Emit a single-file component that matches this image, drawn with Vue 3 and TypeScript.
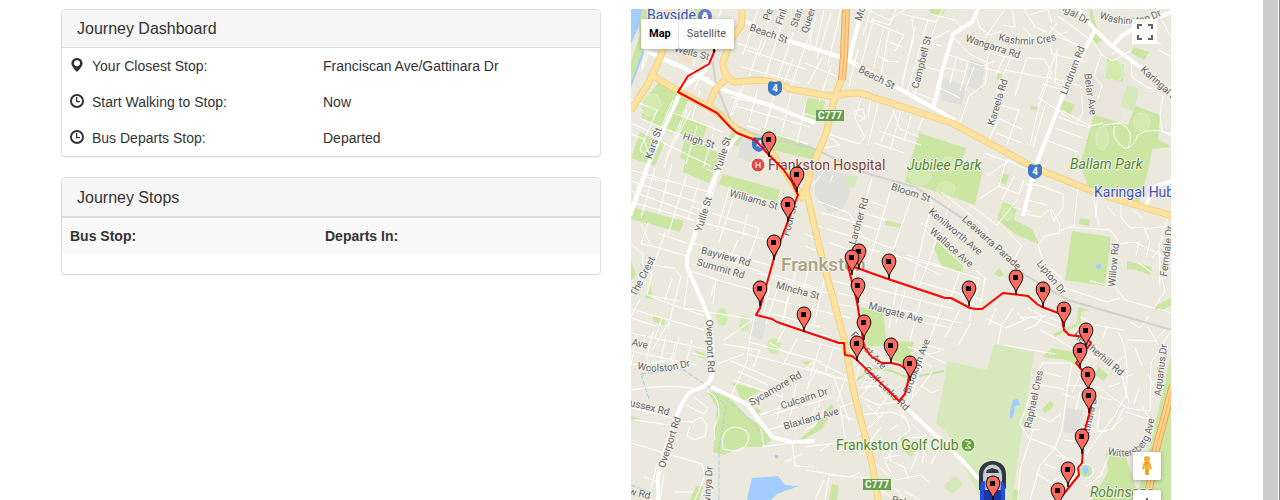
<script setup lang="ts">
interface Label { text: string; x: number; y: number; angle: number }
interface Poi { text: string; x: number; y: number; kind: string }

const journey = [
  { icon: 'pin', label: 'Your Closest Stop:', value: 'Franciscan Ave/Gattinara Dr' },
  { icon: 'clock', label: 'Start Walking to Stop:', value: 'Now' },
  { icon: 'clock', label: 'Bus Departs Stop:', value: 'Departed' },
]

const parks: string[] = [
  'M636 9H650L645 50L631 84V62L640 35Z', 'M631 158L640 132L664 144L655 166Z',
  'M648 96L659 82L690 96L672 134L641 118Z', 'M676 113L707 126L701 144L668 130Z',
  'M685 138L720 154L716 172L680 158Z', 'M735 124L745 132L738 147L727 141Z',
  'M762 128L815 148V160L772 150Z', 'M693 0L705 9L695 32L688 28Z',
  'M631 207L684 221L680 232L631 219Z', 'M686 158L713 173L709 183L683 172Z',
  'M723 174L780 190L777 202L718 184Z', 'M631 260L636 275L631 281Z',
  'M650 282L653 299L645 298Z', 'M653 316L665 320L664 325L652 321Z',
  'M929 9H946Q943 17 935 16Q930 15 929 9Z', 'M805 97L825 101L821 121L805 116Z',
  'M805 148L820 154L816 161L805 157Z', 'M919 133L966 148L962 160L983 169L975 205L947 195L905 182L912 157Z',
  'M1089 0L1099 35L1102 40L1096 44L1092 38Z', 'M1134 47L1149 52L1144 60L1131 53Z',
  'M1107 57L1124 65L1123 82L1106 78Z', 'M1061 99L1075 105L1070 115L1058 108Z',
  'M998 73L1004 75L1002 81L996 79Z', 'M1030 106L1039 107L1038 111L1031 109Z',
  'M1094 115L1128 125L1135 106L1160 115L1158 139L1172 147L1152 149L1148 171L1138 206L1089 189L1080 165Z',
  'M1002 173L1009 175L1006 185L999 182Z', 'M1003 202L1017 207L1014 220L1032 229L1039 244L1015 234L997 219Z',
  'M1072 231L1111 237L1105 286L1065 280Z', 'M1080 218L1090 220L1089 226L1079 224Z',
  'M1127 261L1152 267L1150 275L1137 270L1127 269Z', 'M1172 297V305L1160 311L1154 307Z',
  'M999 268L1004 275L999 277L994 274Z', 'M886 220L901 224L900 228L885 225Z',
  'M938 237L963 262V273L942 268L934 248Z', 'M861 307L883 312L887 346L866 346Z',
  'M888 341L914 342L908 366L890 359Z', 'M1078 307L1090 310L1081 312V323L1077 324Z',
  'M1053 334L1077 323V326L1055 337Z', 'M731 382L761 391L742 401L737 390Z',
  'M695 350L710 356L706 359L698 356Z', 'M707 391L727 395L749 418L761 425L772 440L762 447L742 447L724 455L713 452L717 407Z',
  'M696 486L703 486L699 500H690Z', 'M631 416L640 419L631 420Z', 'M754 406L761 411L757 415Z',
  'M802 362L811 361L808 367Z', 'M797 441L815 427L831 405L834 409L822 429L801 441Z',
  'M1098 366L1108 375L1103 381L1095 375Z', 'M1051 400L1054 406L1046 413L1042 410Z',
  'M901 435L916 445L912 457L902 450Z', 'M832 484L839 485L837 500H829Z',
  'M1052 348L1078 353L1074 365L1067 360L1042 357Z', 'M1106 453L1126 457L1140 500H1092L1108 472Z',
  'M1172 350V500H1136L1152 438Z', 'M1014 489L1020 491L1018 500H1012Z',
]

const paleParks: string[] = [
  'M948 361L987 370L994 344L1034 352L1012 500H981L946 430L936 424Z',
  'M943 486L955 476L963 484L952 494Z', 'M1127 85L1139 89L1134 112L1120 106Z',
  'M847 175L858 177L854 188L845 185Z', 'M741 315L751 318L748 332L738 330Z',
]

const greys: string[] = [
  'M742 130L760 138L756 165L738 157Z', 'M815 170L848 174L850 194L842 210L829 212L815 196Z',
  'M943 79L966 85L962 105L940 100Z', 'M970 60L985 64L981 91L967 86Z',
  'M1066 408L1083 410L1079 434L1063 432Z', 'M752 317L766 320L762 340L750 334Z',
]

const commerce: string[] = [
  'M675 30L695 36L692 64L678 60Z', 'M714 22L730 28L725 39L712 35Z',
  'M856 60L880 70L877 80L858 68Z', 'M947 111L957 116L955 120L945 117Z', 'M751 78L761 79L760 88L749 84Z',
]

// Residential streets, drawn thin.
const streets: string[] = [
  'M655 9L642 67M643 50L676 67M653 15L686 30M665 9L642 70M631 100L657 110L640 150L652 160M640 118L672 132M631 123L655 134M673 100L657 137M691 110L667 158',
  'M704 31L693 66M677 45L692 52M727 25L720 45M706 65L694 90M660 60L710 79M681 86L674 103M700 91L692 119M732 115L745 82M687 109L674 144',
  'M631 134L644 139L651 162M655 139L711 166M661 127L717 149M671 112L723 132M669 150L664 168M681 120L669 151M697 126L686 164M713 134L704 166',
  'M758 9L743 54M773 9L749 76M786 11L764 80M801 10L777 80M816 17L790 89M747 50L805 69M742 67L800 83M756 30L809 49M737 43L757 50M793 59L783 86M767 37L759 56',
  'M740 89L728 121M758 87L749 122M775 90L765 127M791 93L781 136M807 97L797 143M736 106L810 127M747 126L808 144M773 103L765 128M731 97L778 108',
  'M631 170L712 193M631 181L706 205M631 191L700 216M639 184L631 207M655 168L641 218M672 164L659 213M686 177L668 235M699 182L688 219M631 202L694 220M644 177L666 182M663 192L680 196',
  'M648 223L641 244L652 246L690 257M641 224L650 244M659 234L687 243M666 230L654 264M687 219L747 234M692 207L759 228M716 182L707 214M730 186L717 231M736 190L719 242M693 243L772 266M701 222L774 242',
  'M631 244L643 254L642 263L652 274L647 295L678 301M652 265L674 268L682 278M681 276L669 322L653 349M672 279L665 300M631 309L704 330M631 318L656 326M651 297L704 316M640 299L631 317M662 318L655 338M674 303L668 329',
  'M687 270L716 279L711 296M716 279L713 304M692 264L734 277M700 251L775 277M710 278L768 294M738 240L731 256M759 228L751 252L744 268M747 215L742 239M770 285L763 317M689 270L684 308L757 320',
  'M755 315L750 338L747 361L731 396M755 318L724 340M747 354L790 365L820 373L840 379M731 361L783 383M740 346L752 351M738 371L768 385M733 380L783 397M723 344L760 350L753 367',
  'M705 9L700 29M712 12L705 38M722 9L709 38M812 29L809 52M824 10L815 50M831 13L817 59M841 9L828 63M858 49L849 87M874 17L861 65M871 9L863 35M867 20L904 35L895 51M889 31L881 75M883 30L873 70M896 9L890 25L872 20',
  'M867 9L889 20L906 9M912 18L914 38L902 81M915 26L901 91M928 20L907 93M930 36L914 98M943 9L936 22L902 14M936 24L930 41L950 30M926 42L942 46M920 65L940 71M912 91L934 100M885 61L898 62M889 42L902 47M878 56L888 61',
  'M931 14L955 20L963 29M975 13L980 28L990 35L1002 31M953 37L970 54L988 63L985 84L969 96L960 123M946 54L982 66L995 61M943 67L965 72M940 88L960 98M968 63L960 91M957 56L950 83M974 67L965 91',
  'M805 63L836 76M831 66L819 102M822 58L808 84M840 58L853 65M805 114L826 119M861 99L855 118L865 137L859 144L825 133M853 113L865 119M868 117L871 97M854 111L863 109L865 118L860 121M880 95L868 145M875 97L920 116M893 110L900 129L919 137M923 118L918 130M894 111L881 142M901 111L890 150M911 116L904 141M879 131L921 145M874 143L904 153M831 138L840 145L824 148M830 135L815 165',
  'M985 38L1005 9M991 47L985 68L1000 72M985 52L1020 60M1012 9L1015 27L1003 25M1024 9L1035 27L1063 39L1086 48M1030 15L1048 9L1052 23M1023 27L1032 37M1040 39L1050 42L1052 54L1086 62M1050 27L1082 50M1058 16L1088 38M1055 35L1067 32M1057 23L1047 36',
  'M1004 57L996 75M1010 59L1000 83L995 123M1026 60L1015 96M1005 70L1047 78M1026 58L1044 59L1052 72L1045 84L1039 98L1068 117L1072 120M1058 48L1047 77L1081 86L1083 113L1077 122M1048 81L1039 105L1030 145M1000 105L1019 110L1007 145M1000 119L1022 129M1045 106L1033 147M996 133L1022 143M1000 118L985 146M1058 117L1090 128M1055 128L1083 138M1048 141L1078 152M1057 51L1055 82M1042 84L1065 90M1067 88L1054 82M1061 110L1090 126L1103 123',
  'M1091 38L1103 56L1113 61L1130 51M1101 55L1094 76L1102 85L1098 99M1131 62L1132 77L1148 88L1165 88M1163 96L1160 115L1162 131L1171 136M1120 49L1112 54M1153 9L1163 22L1171 37M1159 50L1171 57M1136 31L1146 38L1161 44M1155 24L1160 33M1158 96L1170 94M1115 126Q1110 138 1124 148Q1132 150 1138 135Q1150 126 1172 134M1103 125L1120 123Q1136 130 1128 148',
  'M985 153L1006 161L999 186L979 199M998 186L1019 194L1024 180M987 176L1010 160M1007 160L1034 173M1014 177L1002 200M1018 199L997 225L970 205M997 221L1022 246L1014 259M1035 184L1063 194L1063 208L1053 221M1026 214L1040 217L1050 209L1055 223M1051 208L1060 225L1059 233L1045 236L1038 245L1043 261L1061 278L1065 289M1027 200L1047 205M1025 184L1049 187M1013 207L1031 212M1058 231L1074 226L1078 186M1068 227L1110 230L1118 240L1113 270L1115 286L1125 300L1154 308L1165 291L1160 270',
  'M1092 192L1099 225M1099 191L1095 218M1121 205L1121 217L1130 228L1144 227L1150 242L1146 257M1116 244L1135 242L1155 252L1168 260M1142 207L1158 215M1144 229L1167 226M1168 217L1159 245L1160 287M1139 241L1136 256M1137 262L1151 272M1159 250L1152 258M1063 287L1107 302L1120 298M1090 281L1117 287M1158 309L1172 313M1139 204L1161 212M1107 206L1115 216M1133 210L1142 218',
  'M825 170L812 186M833 175L830 182M872 178L855 241M893 182L869 262M915 188L886 270M933 198L912 285M950 204L918 290M941 192L968 213L988 230M833 216L879 230M862 199L884 206M855 211L887 220M858 235L893 249M865 248L953 270M907 255L980 279M921 223L945 237L968 263L987 280M923 228L963 265M960 271L949 303M979 279L969 321M985 277L981 303M909 260L941 275M912 280L982 300',
  'M818 201L849 213L863 236M822 213L850 220M827 229L857 238M830 243L850 250M813 223L823 228M805 246L822 253M805 234L815 238M869 287L954 309M860 301L961 323M898 281L889 328M905 291L896 323M922 296L910 340M943 303L926 350M960 310L945 337M971 323L958 345M906 319L952 328M833 281L850 285M832 303L858 308M838 293L861 298M832 265L850 266',
  'M775 275L823 290M767 298L850 318M779 284L766 324M796 270L781 328M811 258L803 291M826 271L812 333M766 312L820 327M788 296L783 318M757 273L827 293M765 318L830 337M749 342L823 362M777 343L789 320M770 343L790 355M797 339L783 365M821 343L808 384M834 346L826 371M805 340L850 352M806 366L816 361L846 376M805 367L850 381M817 369L807 389',
  'M631 333L715 351M637 335L631 365M653 332L646 360M666 335L661 359M679 338L672 364M692 340L685 367M631 351L697 365M631 390Q665 384 693 388M631 365L665 361L688 368M675 344L669 369M693 353L713 359M717 364L744 354',
  'M631 408L680 420M635 420L676 426M631 443L702 464L705 476L695 500M658 461L648 500M644 477L659 482M678 421L692 422L701 417L707 425L705 436L694 440L687 436L690 426M686 405L704 414L708 408L692 396M664 474L660 500M675 492L693 492',
  'M707 391Q720 396 719 415L714 428L715 440M723 449Q719 430 734 427Q752 428 748 442Q742 455 723 449M762 447L798 442M750 404L755 420L770 435M770 415L833 397M767 430L809 418M792 442L795 466L815 467M785 462L802 454M764 446L761 429M810 420L816 407M760 415L795 402M783 393L777 419M797 381L790 417M822 385L817 419M834 377L849 421',
  'M860 363L854 388M872 366L861 388L876 386L885 397L900 399M881 369L861 397L878 405L896 402M865 386L891 387L895 395M908 347L930 354L940 351M931 336L912 396M926 345L944 350M918 350L945 363M914 383L901 419M899 410L908 424M932 372L910 401M919 360L932 367M922 386L932 393L938 390',
  'M857 415L891 412L906 417L910 430L897 440L885 462L895 480L921 475L929 482M867 430L883 414M866 447L881 427M892 450L907 438L922 437L930 449M891 444L890 461L904 467L909 479M870 426L856 436M898 425L890 430M912 424L925 437M883 458L901 455M805 447L859 440M805 470L849 477L861 472M820 451L832 443M829 477L825 500M840 405L845 439M854 402L841 407M873 461L890 477M860 454L878 450M922 445L911 469',
  'M805 430L815 425L823 413M828 475L868 478M805 421L837 413L854 420M847 373L837 402M815 500L824 480M879 489L895 500M890 482L905 500M904 491L920 500M938 451L931 464M926 445L922 463M865 382L889 386M864 375L872 378M887 397L875 413M867 405L879 417',
  'M985 318L1006 328L1031 317L1064 329M996 308L989 325M1002 322L998 344M1004 345L1055 354M1013 308L1003 324M1028 308L1043 316L1036 325L1024 330M1024 320L1017 312M1040 330L1057 339L1078 352L1106 361M1020 318L1046 316M1048 317L1063 323M1080 317L1096 325L1123 330M1091 342L1119 364L1126 395L1115 415L1090 448L1070 484M1120 365L1129 403M1107 326L1103 338',
  'M1042 363L1072 363L1067 390L1062 430L1055 448L1040 465L1030 500M1042 363L1020 424L1029 438L1055 448L1078 470M1033 430L1020 470L1018 500M1042 372L1062 377M1040 385L1064 389M1026 410L1050 422L1062 413M1026 429L1040 430M1065 385L1098 387L1127 408L1150 411L1151 363L1172 329M1108 387L1120 383M1094 396L1112 400M1100 409L1097 430M1124 408L1113 429L1090 433M1056 455L1075 460L1084 456M1045 464L1060 470M1048 484L1062 476M1036 473L1053 484',
  'M1118 332Q1130 350 1126 398M1128 340L1154 341L1167 328M1135 348L1142 365M1125 356L1109 369M1123 378L1133 374M1139 389L1134 404M1148 374L1155 388M1151 421L1142 406M1150 387L1162 374M1090 354L1072 393M1075 398L1063 394M1090 428L1107 432M1064 440L1079 442M1080 392L1076 410M1123 418L1110 430M1125 412L1152 420M1086 487L1101 475L1112 448M1148 327L1158 345M1130 322L1140 328L1149 316',
]

const arterials: string[] = [
  'M743 20L776 37L815 49L849 60L898 88L955 120', 'M862 9L849 60', 'M978 9L972 22L953 34L942 72L933 109',
  'M1078 9L1095 30L1113 47L1142 68L1172 92', 'M1172 12Q1145 22 1128 32Q1117 38 1113 47', 'M1095 30L1069 80L1035 168L1023 216',
  'M716 52L702 74L683 87L662 133L648 165L630 216', 'M644 50L682 67L724 90L772 106L815 123',
  'M740 133L728 148L712 185L687 257V267L709 317L712 345V374Q712 385 692 391Q677 401 658 477V500',
  'M711 387L747 404L772 437L792 442L815 441', 'M856 358L900 402L962 460L983 484L990 505', 'M1146 205L1154 187L1172 181',
]

const highways: string[] = [
  'M668 9L672 25L660 58L648 84L631 110', 'M651 75L682 93L717 112L740 132L757 139L772 153L804 200',
  'M742 9V24L731 40L723 62Q723 77 735 82L757 80Q778 81 790 89L835 97Q855 89 872 97L952 123L1035 168L1100 194L1172 216',
  'M725 80L715 90L709 105', 'M843 75L835 97L825 137L812 167L806 190L820 250L843 335L855 397L872 463L878 500', 'M806 190L796 198',
]

const freeways: string[] = ['M846 9L844 55L842 80', 'M1173 385L1155 453L1147 502']

const railway = 'M717 25L712 58L716 85L732 124L757 135L815 149L862 172L915 187L965 220L1025 275L1068 300L1172 330'

const ovals = [
  { x: 651, y: 105, rx: 9, ry: 11, a: 25 }, { x: 1115, y: 70, rx: 8, ry: 11, a: -15 }, { x: 1102, y: 138, rx: 6, ry: 12, a: 0 },
  { x: 1142, y: 122, rx: 8, ry: 9, a: 0 }, { x: 920, y: 176, rx: 11, ry: 9, a: 0 }, { x: 946, y: 189, rx: 9, ry: 7, a: 0 },
  { x: 949, y: 165, rx: 9, ry: 8, a: 0 }, { x: 1007, y: 214, rx: 5, ry: 6, a: 0 }, { x: 722, y: 317, rx: 6, ry: 9, a: 0 }, { x: 774, y: 346, rx: 7, ry: 8, a: 0 },
]

const roadLabels: Label[] = [
  { text: 'Wells St', x: 692, y: 52, angle: 14 }, { text: 'Beach St', x: 769, y: 33, angle: 19 },
  { text: 'Penn', x: 769, y: 9, angle: -72 }, { text: 'Finlay', x: 782, y: 12, angle: -72 }, { text: 'Stanley', x: 798, y: 11, angle: -72 },
  { text: 'Queen', x: 808, y: 19, angle: -72 }, { text: 'Beach St', x: 877, y: 77, angle: 27 }, { text: 'Moor', x: 861, y: 9, angle: -72 },
  { text: 'Campbell St', x: 921, y: 62, angle: -76 }, { text: 'Wangarra Rd', x: 993, y: 46, angle: 18 },
  { text: 'Karingal Dr', x: 1067, y: 9, angle: 29 }, { text: 'Lindrum Rd', x: 1072, y: 70, angle: -69 }, { text: 'Belar Ave', x: 1091, y: 94, angle: 82 },
  { text: 'Karingal Dr', x: 1161, y: 84, angle: 42 }, { text: 'Kareela Rd', x: 997, y: 102, angle: -73 }, { text: 'Kars St', x: 653, y: 143, angle: -71 },
  { text: 'High St', x: 699, y: 140, angle: 17 }, { text: 'Yuille St', x: 722, y: 154, angle: -73 }, { text: 'Yuille St', x: 703, y: 214, angle: -73 },
  { text: 'Williams St', x: 754, y: 199, angle: 16 }, { text: 'Foot St', x: 789, y: 220, angle: -75 }, { text: 'Bayview Rd', x: 726, y: 256, angle: 15 },
  { text: 'Summit Rd', x: 721, y: 268, angle: 16 }, { text: 'The Crest', x: 642, y: 276, angle: -63 }, { text: 'Mincha St', x: 798, y: 290, angle: 15 },
  { text: 'Lardner Rd', x: 858, y: 221, angle: -74 }, { text: 'Bloom St', x: 911, y: 192, angle: 18 }, { text: 'Kenilworth Ave', x: 956, y: 231, angle: 40 },
  { text: 'Wallace Ave', x: 952, y: 247, angle: 41 }, { text: 'Leawarra Parade', x: 992, y: 242, angle: 42 }, { text: 'Margate Ave', x: 896, y: 312, angle: 15 },
  { text: 'Willow Rd', x: 1113, y: 265, angle: -85 }, { text: 'Lipton Dr', x: 1052, y: 277, angle: 51 }, { text: 'Ferndale Dr', x: 1166, y: 251, angle: -83 },
  { text: 'Overport Rd', x: 711, y: 346, angle: 88 }, { text: 'Overport Rd', x: 669, y: 442, angle: -72 }, { text: 'Ave', x: 640, y: 343, angle: 12 },
  { text: 'Sussex Rd', x: 647, y: 406, angle: 14 }, { text: 'View Rd', x: 633, y: 491, angle: 14 }, { text: 'Gavinya Dr', x: 707, y: 490, angle: -86 },
  { text: 'Sycamore Rd', x: 775, y: 388, angle: -30 }, { text: 'Culcairn Dr', x: 804, y: 398, angle: -18 }, { text: 'Blaxland Ave', x: 811, y: 418, angle: -16 },
  { text: 'Golf Links Rd', x: 887, y: 388, angle: 44 }, { text: 'Forest Ave', x: 869, y: 350, angle: 47 }, { text: 'Brooklyn Ave', x: 916, y: 366, angle: -69 },
  { text: 'Raphael Cres', x: 1033, y: 399, angle: -78 }, { text: 'Heatherhill Rd', x: 1099, y: 353, angle: 40 }, { text: 'Aquarius Dr', x: 1160, y: 370, angle: -83 },
  { text: 'Gattinara Dr', x: 1088, y: 420, angle: -77 }, { text: 'Robinsons Rd', x: 922, y: 505, angle: 12 },
]

const curvedLabels = [
  { id: 'kashmir', text: 'Kashmir Cres', d: 'M998 40Q1030 50 1062 38' },
  { id: 'washington', text: 'Washington Dr', d: 'M1099 18Q1140 34 1172 8' },
  { id: 'woolston', text: 'Woolston Dr', d: 'M637 369Q660 376 697 364' },
  { id: 'wittersberg', text: 'Wittersberg Ave', d: 'M1107 454Q1154 468 1155 405' },
]

const places: Poi[] = [
  { text: 'Bayside', x: 647, y: 20, kind: 'shop' }, { text: 'Karingal Hub', x: 1094, y: 197, kind: 'shop' },
  { text: 'Frankston Hospital', x: 768, y: 170, kind: 'hospital' }, { text: 'Jubilee Park', x: 907, y: 170, kind: 'park' },
  { text: 'Ballam Park', x: 1070, y: 169, kind: 'park' }, { text: 'Robinsons', x: 1090, y: 497, kind: 'park' },
  { text: 'Frankston Golf Club', x: 836, y: 450, kind: 'golf' }, { text: 'Frankston', x: 781, y: 271, kind: 'suburb' },
]

const shields = [{ x: 759, y: 144 }, { x: 775, y: 88 }, { x: 1035, y: 171 }]
const routeTags = [{ x: 816, y: 110 }, { x: 863, y: 479 }]

const route = 'M715 50L709 64L688 76L678 92L717 113L731 128L737 133L755 140L769 155L783 169L792 182L798 195L791 213L774 258L760 308L756 315L772 319L777 322L839 343L844 343L845 355L852 356L857 360L899 401L905 394L909 377L907 370L900 365L891 363H882L872 357L864 347L862 333L857 302L848 266L857 268L888 279L945 298H951L970 308L976 309H982L1003 293L1028 296L1037 304L1042 307L1061 314L1064 330L1069 335L1085 337L1091 343L1076 363L1082 370L1088 380L1091 408L1084 433L1082 463L1078 468L1079 475L1062 496L1055 505'

const stops: [number, number][] = [
  [714, 52], [769, 157], [797, 192], [788, 222], [774, 260], [760, 306], [804, 332], [859, 269], [852, 275], [889, 279], [858, 303],
  [969, 306], [1016, 295], [1043, 307], [1064, 327], [864, 340], [1086, 348], [857, 361], [891, 363], [1080, 368], [910, 381],
  [1088, 392], [1089, 413], [1082, 454], [1068, 487], [993, 501], [1058, 508],
]
</script>

<template>
  <div class="page">
    <main class="columns">
      <div class="side">
        <section class="panel">
          <h2 class="heading">Journey Dashboard</h2>
          <table class="details">
            <tbody>
              <tr v-for="row in journey" :key="row.label">
                <th scope="row">
                  <span class="with-icon">
                    <svg v-if="row.icon === 'pin'" class="icon" viewBox="0 0 14 14" aria-hidden="true">
                      <path fill-rule="evenodd" d="M7 0C3.9 0 1.4 2.3 1.4 5.2C1.4 8 4.5 11.5 7 14C9.5 11.5 12.6 8 12.6 5.2C12.6 2.3 10.1 0 7 0ZM7 2.2A3 3 0 1 1 7 8.2A3 3 0 1 1 7 2.2Z" />
                    </svg>
                    <svg v-else class="icon" viewBox="0 0 14 14" aria-hidden="true">
                      <circle class="ring" cx="7" cy="7" r="6" />
                      <path d="M6 3H7.3V7H10V8.2H6Z" />
                    </svg>
                    {{ row.label }}
                  </span>
                </th>
                <td>{{ row.value }}</td>
              </tr>
            </tbody>
          </table>
        </section>

        <section class="panel stops-panel">
          <h2 class="heading">Journey Stops</h2>
          <table class="stops">
            <thead>
              <tr><th scope="col">Bus Stop:</th><th scope="col">Departs In:</th></tr>
            </thead>
          </table>
        </section>
      </div>

      <section class="map" aria-label="Route map">
        <svg class="canvas" viewBox="631 9 540 491" preserveAspectRatio="xMinYMin slice">
          <rect class="land" x="631" y="9" width="540" height="491" />
          <path class="sand" d="M1058 90L1072 115L1094 118L1120 122L1124 104L1130 75L1098 68Z" />
          <path class="grey-area" v-for="d in greys" :key="d" :d="d" />
          <path class="commerce" v-for="d in commerce" :key="d" :d="d" />
          <path class="park" v-for="d in parks" :key="d" :d="d" />
          <path class="pale" v-for="d in paleParks" :key="d" :d="d" />
          <path class="water" d="M631 9H642L638 28L631 44ZM752 478L778 476L785 485L799 486L777 494L771 500H747Z" />
          <path class="water" d="M775 455H778V458H775ZM1096 265L1101 264V269L1096 268ZM1013 400L1018 399L1020 405L1015 406L1013 417L1010 419V411Z" />
          <path class="creek" d="M648 22L644 50L631 85" />
          <path class="stream" d="M641 374L649 399M641 374L682 369L712 389L726 407L719 450V500M726 400L742 412L755 424L768 447M631 485L650 492" />
          <path class="path" d="M856 380L875 368L892 371L909 378L944 371" />
          <path class="path" d="M797 445L815 428L832 405" />
          <ellipse v-for="o in ovals" :key="`${o.x}-${o.y}`" class="oval" :cx="o.x" :cy="o.y" :rx="o.rx" :ry="o.ry" :transform="`rotate(${o.a} ${o.x} ${o.y})`" />
          <path class="street" v-for="d in streets" :key="d" :d="d" />
          <path class="rail" :d="railway" />
          <path class="arterial" v-for="d in arterials" :key="d" :d="d" />
          <path class="highway-edge" v-for="d in highways" :key="`e${d}`" :d="d" />
          <path class="highway" v-for="d in highways" :key="d" :d="d" />
          <path class="freeway-edge" v-for="d in freeways" :key="`e${d}`" :d="d" />
          <path class="freeway" v-for="d in freeways" :key="d" :d="d" />
          <path class="freeway-line" v-for="d in freeways" :key="`l${d}`" :d="d" />
          <circle class="roundabout" cx="1086" cy="471" r="7" />
          <path class="water" d="M1082 468L1087 465L1089 472L1085 475Z" />

          <text v-for="l in roadLabels" :key="`${l.text}${l.x}`" class="road-label" :x="l.x" :y="l.y" dy="4" :transform="`rotate(${l.angle} ${l.x} ${l.y})`">{{ l.text }}</text>
          <g v-for="c in curvedLabels" :key="c.id">
            <path :id="c.id" :d="c.d" fill="none" />
            <text class="curve-label"><textPath :href="`#${c.id}`">{{ c.text }}</textPath></text>
          </g>

          <g v-for="s in shields" :key="s.x" :transform="`translate(${s.x} ${s.y})`">
            <path class="shield" d="M-5 -7L0 -6L5 -7L7 -4V2Q6 6 0 8Q-6 6 -7 2V-4Z" />
            <text class="shield-text" y="4">4</text>
          </g>
          <g v-for="t in routeTags" :key="t.x">
            <rect class="tag" :x="t.x" :y="t.y" width="28" height="11" />
            <text class="tag-text" :x="t.x + 14" :y="t.y + 9">C777</text>
          </g>

          <g transform="translate(705 16)">
            <circle r="7" fill="#6878cf" /><path d="M-3 -1H3V4H-3ZM-2 -1V-2A2 2 0 0 1 2 -2V-1" fill="#fff" /><path d="M-1 1H1V2H-1Z" fill="#6878cf" />
          </g>
          <g transform="translate(758 165)">
            <circle r="7" fill="#d64b46" stroke="#fff" /><path d="M-2 -3V3M2 -3V3M-2 0H2" stroke="#fff" fill="none" />
          </g>
          <g transform="translate(968 445)">
            <circle r="7" fill="#67a53b" stroke="#fff" /><path d="M-3 -4L2 -3L-1 0L3 3H-3M2 -3V-1" stroke="#fff" fill="none" />
          </g>
          <text v-for="p in places" :key="p.text" class="place" :class="p.kind" :x="p.x" :y="p.y">{{ p.text }}</text>

          <path class="route" :d="route" />

          <g transform="translate(992 480)">
            <path fill="#c8cdd0" d="M-10 20V-5A11 12 0 0 1 12 -5V20Z" />
            <path fill="#2d393f" fill-rule="evenodd" d="M-13 10V-6C-13 -14 -7 -19 0.5 -19C8 -19 14 -14 14 -6V8L10 14V-5A9 10 0 0 0 -9 -5V10Z" />
            <path fill="#2d393f" d="M-5 -10L0 -12L6 -10L7 -7H-6ZM-5 -3H7V0H-5Z" />
            <path fill="#244bdc" d="M-12 7Q-12 1 -7 1V20H-12ZM9 1Q13 2 13 8V20H8Z" />
            <path fill="#1938a5" d="M-8 10H9V20H-8Z" />
          </g>

          <g v-for="[x, y] in stops" :key="`${x}-${y}`" :transform="`translate(${x} ${y})`">
            <path class="marker" d="M0 0C0 -6 -3 -8 -5 -12C-9 -18 -6 -25 0 -25C6 -25 9 -18 5 -12C3 -8 0 -6 0 0Z" />
            <rect x="-3" y="-20" width="5" height="5" />
          </g>
        </svg>

        <div class="map-type">
          <button type="button" class="active">Map</button>
          <button type="button">Satellite</button>
        </div>
        <button type="button" class="control fullscreen" aria-label="Toggle fullscreen view">
          <svg viewBox="0 0 16 16"><path d="M1 5V1H5M11 1H15V5M15 11V15H11M5 15H1V11" /></svg>
        </button>
        <div class="bottom-controls">
          <button type="button" class="control pegman" aria-label="Street View">
            <svg viewBox="0 0 14 20">
              <path fill="#f3b02f" d="M4 6Q7 5 10 6L12 13L10 14L9 10L9 19H5V10L4 14L2 13Z" />
              <path fill="#d58b1c" d="M6 6H8L7 9ZM6.5 13H7.5V19H6.5Z" />
              <circle cx="7" cy="3" r="3" fill="#f3b02f" /><path fill="#d58b1c" d="M5 5Q7 7 9 5L8 6H6Z" />
            </svg>
          </button>
          <button type="button" class="control zoom" aria-label="Zoom in">
            <svg viewBox="0 0 16 16"><path d="M8 2V14M2 8H14" /></svg>
          </button>
        </div>
      </section>
    </main>
    <div class="scroll-track"></div>
  </div>
</template>

<style>
body { margin: 0; background: #fff; }
</style>

<style scoped>
.page { display: flex; height: 100vh; overflow: hidden; font: 14px/20px "Liberation Sans", Arial, sans-serif; color: #333; }
.columns { flex: 1; display: grid; grid-template-columns: 1fr 1fr; gap: 30px; padding: 9px 92px 0 61px; min-width: 0; }
.scroll-track { width: 15px; background: #cdcdcd; margin-right: 1px; flex: none; }
.page::after { content: ""; width: 1px; background: #858585; }
.side { display: flex; flex-direction: column; gap: 20px; }
.panel { border: 1px solid #ddd; border-radius: 4px; box-shadow: 0 1px 1px rgba(0, 0, 0, .05); overflow: hidden; }
.stops-panel { padding-bottom: 20px; }
.heading { margin: 0; padding: 10px 15px; font-size: 16px; line-height: 17px; font-weight: 400; background: #f5f5f5; border-bottom: 1px solid #ddd; }
.stops-panel .heading { padding: 11px 15px 10px; }
table { width: 100%; border-collapse: separate; border-spacing: 0; table-layout: fixed; }
th, td { padding: 8px; text-align: left; }
.details th { width: 237px; font-weight: 400; }
.with-icon { display: flex; gap: 8px; }
.icon { width: 14px; height: 14px; margin-top: 2px; fill: #333; }
.ring { fill: none; stroke: #333; stroke-width: 2; }
.stops th { background: #f9f9f9; border-top: 1px solid #ddd; }
.stops th:first-child { width: 239px; }

.map { position: relative; overflow: hidden; background: #e9e6dc; min-height: 0; font-family: Roboto, sans-serif; }
.canvas { display: block; width: 100%; height: 100%; }
.land { fill: #ebe8de; }
.sand { fill: #e9e4dc; }
.grey-area { fill: #dfdfdb; }
.commerce { fill: #f2dfcd; }
.park { fill: #cae6a2; }
.pale { fill: #d5e9bb; }
.water { fill: #a3ccff; }
.creek { fill: none; stroke: #a3ccff; stroke-width: 2; }
.stream { fill: none; stroke: #aecbe8; stroke-width: 1; stroke-dasharray: 5 2; }
.path { fill: none; stroke: #c4e2a0; stroke-width: 2; }
.oval { fill: #d2eaae; stroke: #deefc3; }
.street { fill: none; stroke: #fff; stroke-width: 1; stroke-linejoin: round; }
.arterial { fill: none; stroke: #fff; stroke-width: 4; stroke-linejoin: round; }
.rail { fill: none; stroke: #d0d0ce; stroke-width: 2; }
.highway-edge, .highway, .freeway, .freeway-edge, .freeway-line { fill: none; stroke-linejoin: round; }
.highway-edge { stroke: #f0d184; stroke-width: 7; }
.highway { stroke: #ffe29d; stroke-width: 5; }
.freeway-edge { stroke: #e7a65c; stroke-width: 8; }
.freeway { stroke: #ffd08a; stroke-width: 6; }
.freeway-line { stroke: #efb368; stroke-width: 1; }
.roundabout { fill: #c8e5a4; stroke: #fff; stroke-width: 1; }
text { font-family: Roboto, sans-serif; paint-order: stroke; stroke-linejoin: round; }
.road-label, .curve-label { font-size: 10px; fill: #666; stroke: #f3f1eb; stroke-width: 2; }
.road-label { text-anchor: middle; }
.place { font-size: 14px; stroke: #f6f4ee; stroke-width: 2; }
.shop { fill: #4052ba; }
.hospital { fill: #81413d; }
.park.place, .golf { fill: #4f8c26; }
.park.place { font-style: italic; }
.suburb { font-size: 19px; font-weight: 500; fill: #aaa184; }
.shield { fill: #3b77c6; }
.shield-text { font-size: 10px; font-weight: 700; fill: #fff; text-anchor: middle; }
.tag { fill: #66a04c; }
.tag-text { font-size: 10px; font-weight: 700; fill: #fff; text-anchor: middle; }
.route { fill: none; stroke: #f00; stroke-width: 2; stroke-linejoin: round; }
.marker { fill: #fb6a5f; stroke: #000; stroke-width: 1; }

button { border: 0; padding: 0; margin: 0; background: #fff; cursor: pointer; font: 11px/14px Roboto, sans-serif; color: #565656; }
.map-type { position: absolute; top: 10px; left: 10px; display: flex; border-radius: 2px; box-shadow: 0 1px 4px rgba(0, 0, 0, .3); }
.map-type button { padding: 8px; border-radius: 2px; }
.map-type .active { font-weight: 700; color: #000; box-shadow: inset -1px 0 #e2e2e2; }
.control { display: grid; place-items: center; }
.control svg { width: 16px; height: 16px; fill: none; stroke: #666; stroke-width: 2; }
.fullscreen { position: absolute; top: 10px; right: 14px; width: 25px; height: 25px; }
.bottom-controls { position: absolute; right: 10px; bottom: -18px; display: flex; flex-direction: column; gap: 10px; }
.bottom-controls .control { width: 28px; height: 28px; border-radius: 2px; box-shadow: 0 1px 4px rgba(0, 0, 0, .3); }
.control.pegman svg { width: 14px; height: 20px; stroke: none; }
</style>
